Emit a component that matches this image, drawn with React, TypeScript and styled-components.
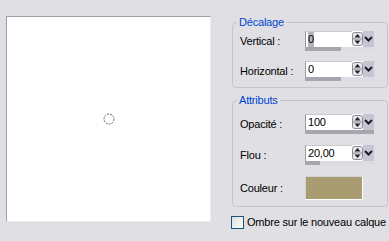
import styled, { createGlobalStyle } from 'styled-components';

const GlobalStyle = createGlobalStyle`
  html, body {
    margin: 0;
    padding: 0;
    background: #e0dfe3;
  }
  body {
    font-family: 'Liberation Sans', Arial, sans-serif;
    font-size: 11px;
    letter-spacing: -0.2px;
    line-height: 15px;
    color: #000;
  }
`;

const Dialog = styled.div`
  width: 389px;
  height: 241px;
  box-sizing: border-box;
  padding: 16px 0 0 6px;
  display: flex;
  align-items: flex-start;
  overflow: hidden;
`;

const Preview = styled.div`
  width: 205px;
  height: 206px;
  box-sizing: border-box;
  background: #fff;
  border-top: 1px solid #a0a0a6;
  border-left: 1px solid #a0a0a6;
  border-right: 1px solid #ececef;
  border-bottom: 1px solid #ececef;
  display: flex;
  align-items: center;
  justify-content: center;
`;

const Side = styled.div`
  width: 156px;
  margin: -1px 0 0 21px;
  display: flex;
  flex-direction: column;
`;

const Group = styled.fieldset<{ $top?: number; $gap: number; $pt: number }>`
  margin: ${(p) => p.$top ?? 0}px 0 0 0;
  padding: ${(p) => p.$pt}px 0 6px 7px;
  border: 1px solid #c5c5cb;
  border-radius: 4px;
  display: flex;
  flex-direction: column;
  gap: ${(p) => p.$gap}px;
  min-width: 0;
`;

const Legend = styled.legend`
  color: #0046d5;
  padding: 0 2px;
  margin-left: -3px;
`;

const Row = styled.div`
  display: flex;
  align-items: center;
  min-height: 20px;
`;

const Label = styled.span`
  width: 65px;
  flex-shrink: 0;
  white-space: nowrap;
`;

const Spin = styled.div`
  width: 69px;
  display: flex;
  flex-direction: column;
`;

const SpinTop = styled.div`
  display: flex;
  height: 16px;
`;

const SpinInput = styled.div`
  flex: 1;
  box-sizing: border-box;
  background: #fff;
  border-left: 1px solid #9a9aa4;
  border-top: 1px solid #c8c8d0;
  padding-left: 2px;
  display: flex;
  align-items: center;
`;

const Selected = styled.span`
  background: #b4b4bc;
`;

const SpinBtn = styled.div`
  width: 11px;
  flex-shrink: 0;
  background: #fff;
  display: flex;
  align-items: center;
  justify-content: center;
`;

const DropBtn = styled.div`
  width: 11px;
  flex-shrink: 0;
  background: #c6c6d2;
  display: flex;
  align-items: center;
  justify-content: center;
`;

const Track = styled.div`
  height: 4px;
  background: #dcdce2;
  display: flex;
`;

const TrackFill = styled.div`
  height: 100%;
  background: #a6a6ae;
`;

const Swatch = styled.div<{ $color: string }>`
  width: 58px;
  height: 24px;
  box-sizing: border-box;
  background: ${(p) => p.$color};
  border: 1px solid #fff;
  border-top-color: #d4d4d8;
  border-left-color: #d4d4d8;
`;

const CheckRow = styled.label`
  display: flex;
  align-items: center;
  gap: 3px;
  margin: 8px 0 0 -1px;
  white-space: nowrap;
`;

const Box = styled.span`
  width: 13px;
  height: 13px;
  box-sizing: border-box;
  border: 1px solid #1c5180;
  background: linear-gradient(135deg, #dcdcd7, #fff);
  flex-shrink: 0;
`;

const SpinArrows = () => (
  <svg width="11" height="16" viewBox="0 0 11 16">
    <rect x="0.5" y="1.5" width="10" height="13" rx="2" fill="#e4e4ea" stroke="#8c8c98" />
    <line x1="1" y1="8" x2="10" y2="8" stroke="#8c8c98" />
    <path d="M5.5 3 L8.5 6.5 L2.5 6.5 Z" fill="#222" />
    <path d="M5.5 13 L8.5 9.5 L2.5 9.5 Z" fill="#222" />
  </svg>
);

const Chevron = () => (
  <svg width="9" height="8" viewBox="0 0 9 8">
    <path d="M1 2 L4.5 5.5 L8 2" fill="none" stroke="#1a1a2a" strokeWidth="2" />
  </svg>
);

interface SpinProps {
  value: string;
  fill: number;
  selected?: boolean;
}

const SpinControl = ({ value, fill, selected }: SpinProps) => (
  <Spin>
    <SpinTop>
      <SpinInput>{selected ? <Selected>{value}</Selected> : value}</SpinInput>
      <SpinBtn>
        <SpinArrows />
      </SpinBtn>
      <DropBtn>
        <Chevron />
      </DropBtn>
    </SpinTop>
    <Track>
      <TrackFill style={{ width: `${fill}%` }} />
    </Track>
  </Spin>
);

export default function App() {
  return (
    <>
      <GlobalStyle />
      <Dialog>
        <Preview>
          <svg width="12" height="12" viewBox="0 0 12 12">
            <circle cx="6" cy="6" r="5" fill="none" stroke="#6a6a6a" strokeDasharray="2 1" />
          </svg>
        </Preview>
        <Side>
          <Group $gap={10} $pt={1}>
            <Legend>Décalage</Legend>
            <Row>
              <Label>Vertical :</Label>
              <SpinControl value="0" fill={52} selected />
            </Row>
            <Row>
              <Label>Horizontal :</Label>
              <SpinControl value="0" fill={52} />
            </Row>
          </Group>
          <Group $top={5} $gap={11} $pt={6}>
            <Legend>Attributs</Legend>
            <Row>
              <Label>Opacité :</Label>
              <SpinControl value="100" fill={100} />
            </Row>
            <Row>
              <Label>Flou :</Label>
              <SpinControl value="20,00" fill={22} />
            </Row>
            <Row>
              <Label>Couleur :</Label>
              <Swatch $color="#a89c70" />
            </Row>
          </Group>
          <CheckRow>
            <Box />
            Ombre sur le nouveau calque
          </CheckRow>
        </Side>
      </Dialog>
    </>
  );
}
